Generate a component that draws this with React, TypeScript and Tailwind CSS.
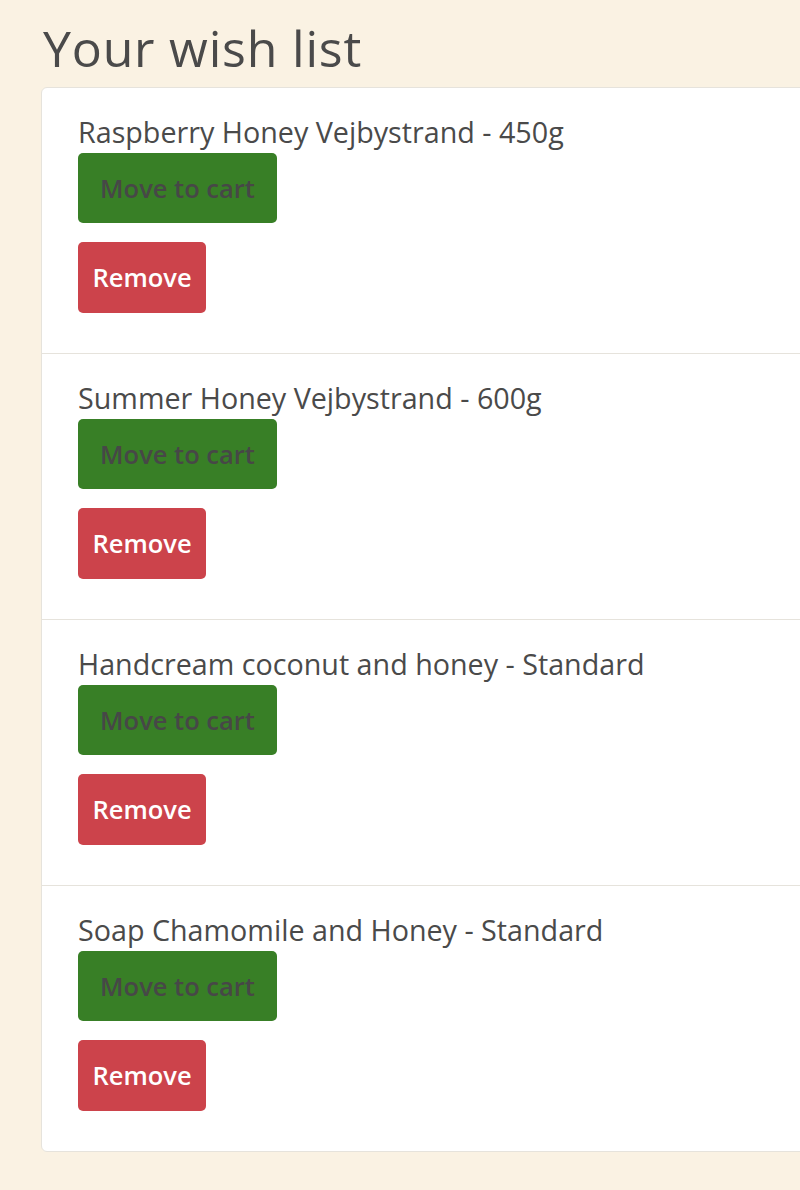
import React from "react";

const items = [
  "Raspberry Honey Vejbystrand - 450g",
  "Summer Honey Vejbystrand - 600g",
  "Handcream coconut and honey - Standard",
  "Soap Chamomile and Honey - Standard",
];

export default function App() {
  return (
    <div
      className="min-h-[1190px] w-[800px] overflow-hidden bg-[#faf2e3] pt-[18px] pl-[41px]"
      style={{ fontFamily: '"Open Sans", "Noto Sans", sans-serif' }}
    >
      <h1 className="mb-[9px] pl-[2px] text-[50px] leading-[60px] text-[#4a4a4a] tracking-[0.8px]">
        Your wish list
      </h1>
      <div className="w-[800px] rounded-l-[6px] border border-[#e6e3dc] bg-white">
        {items.map((name, i) => (
          <div
            key={name}
            className={`flex flex-col items-start pl-[36px] ${
              i > 0 ? "h-[266px] border-t border-[#e6e3dc] pt-[24px]" : "h-[265px] pt-[24px]"
            }`}
          >
            <div className="text-[28.7px] leading-[40px] text-[#4a4a4a]">{name}</div>
            <button className="mt-[1px] flex h-[70px] w-[199px] items-center justify-center rounded-[5px] bg-[#387f26] text-[25.5px] font-semibold text-[#474747]">
              Move to cart
            </button>
            <button className="mt-[19px] flex h-[71px] w-[128px] items-center justify-center rounded-[5px] bg-[#cc434b] text-[25.5px] font-semibold text-white">
              Remove
            </button>
          </div>
        ))}
      </div>
    </div>
  );
}
